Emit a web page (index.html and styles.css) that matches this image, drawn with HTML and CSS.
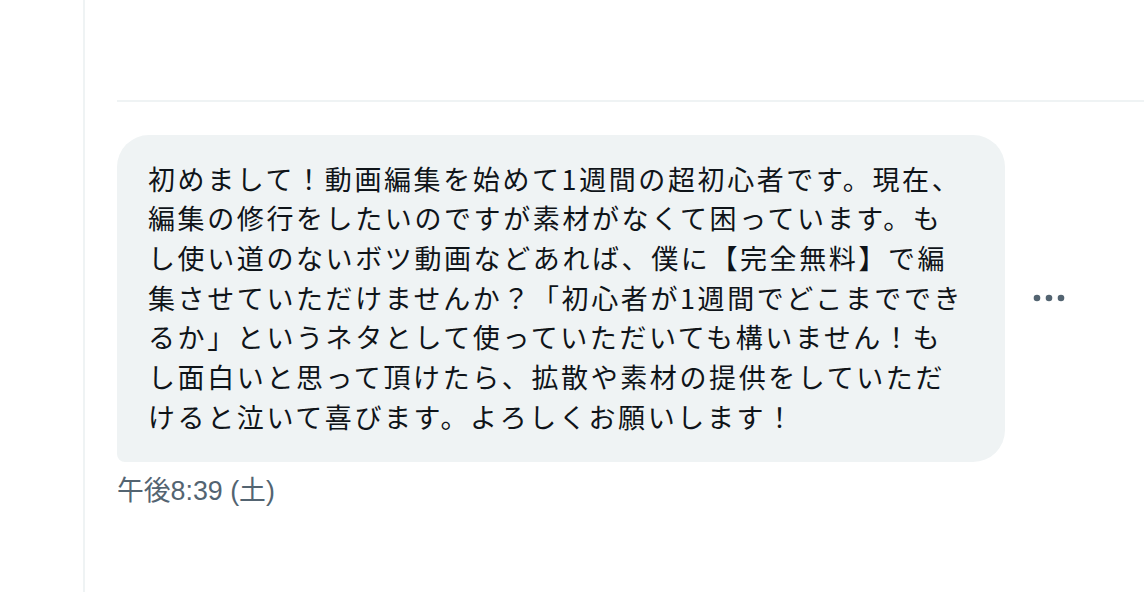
FILE: index.html
```html
<!DOCTYPE html>
<html lang="ja">
<head>
<meta charset="utf-8">
<title>DM</title>
<link rel="stylesheet" href="styles.css">
</head>
<body>
<div class="page">
  <div class="gutter"></div>
  <div class="main">
    <div class="divider"></div>
    <div class="row">
      <div class="bubble">初めまして！動画編集を始めて1週間の超初心者です。現在、編集の修行をしたいのですが素材がなくて困っています。もし使い道のないボツ動画などあれば、僕に【完全無料】で編集させていただけませんか？「初心者が1週間でどこまでできるか」というネタとして使っていただいても構いません！もし面白いと思って頂けたら、拡散や素材の提供をしていただけると泣いて喜びます。よろしくお願いします！</div>
      <div class="more">
        <svg width="36" height="36" viewBox="0 0 36 36" aria-hidden="true">
          <circle cx="6" cy="18" r="3.3" fill="#536471"/>
          <circle cx="18" cy="18" r="3.3" fill="#536471"/>
          <circle cx="30" cy="18" r="3.3" fill="#536471"/>
        </svg>
      </div>
    </div>
    <div class="time">午後8:39 (土)</div>
  </div>
</div>
</body>
</html>
```

FILE: styles.css
```css
html, body {
  margin: 0;
  padding: 0;
  background: #ffffff;
}

.page {
  display: flex;
  height: 592px;
  overflow: hidden;
}

.gutter {
  width: 83px;
  flex: none;
  border-right: 2px solid #eff3f4;
}

.main {
  flex: 1;
  padding-left: 32px;
}

.divider {
  margin-top: 100px;
  height: 2px;
  background: #eff3f4;
}

.row {
  margin-top: 33px;
  display: flex;
  align-items: center;
}

.bubble {
  width: 888px;
  box-sizing: border-box;
  flex: none;
  padding: 23.5px 36px 25.5px 31px;
  background: #eff3f4;
  border-radius: 32px 32px 32px 8px;
  color: #0f1419;
  font-family: "Noto Sans CJK JP", "Noto Sans", sans-serif;
  font-size: 27px;
  letter-spacing: 2.6px;
  line-height: 39.67px;
  line-break: strict;
}

.more {
  margin-left: 26px;
  width: 36px;
  height: 36px;
  display: flex;
}

.time {
  margin-top: 14px;
  color: #536471;
  font-family: "Liberation Sans", "Noto Sans CJK JP", sans-serif;
  font-size: 26.8px;
  line-height: 31.7px;
}
```
